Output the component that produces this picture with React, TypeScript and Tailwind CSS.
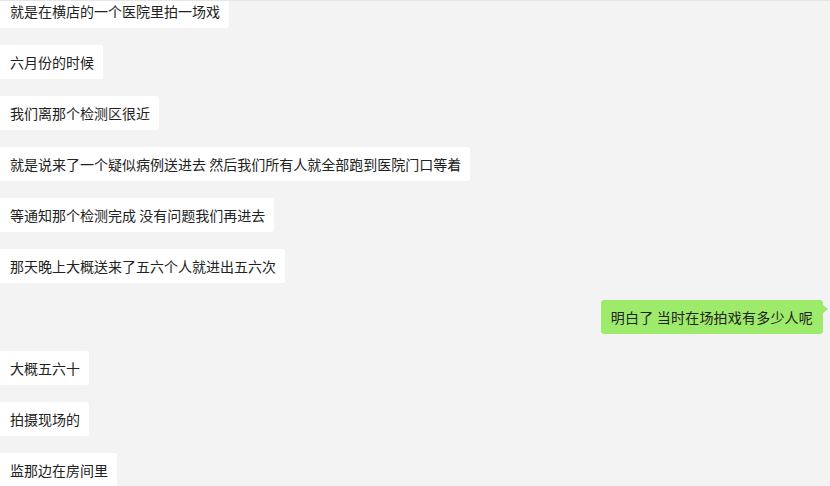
const messages = [
  { side: "left", text: "就是在横店的一个医院里拍一场戏" },
  { side: "left", text: "六月份的时候" },
  { side: "left", text: "我们离那个检测区很近" },
  { side: "left", text: "就是说来了一个疑似病例送进去 然后我们所有人就全部跑到医院门口等着" },
  { side: "left", text: "等通知那个检测完成 没有问题我们再进去" },
  { side: "left", text: "那天晚上大概送来了五六个人就进出五六次" },
  { side: "right", text: "明白了 当时在场拍戏有多少人呢" },
  { side: "left", text: "大概五六十" },
  { side: "left", text: "拍摄现场的" },
  { side: "left", text: "监那边在房间里" },
];

export default function App() {
  return (
    <div
      className="w-[830px] h-[486px] bg-[#f3f3f3] border-t border-[#e6e6e6] overflow-hidden"
      style={{ fontFamily: '"Microsoft YaHei", "Noto Sans CJK SC", sans-serif' }}
    >
      <div className="-mt-[7px] flex flex-col gap-[17px]">
        {messages.map((m, i) =>
          m.side === "left" ? (
            <div key={i} className="flex">
              <div className="-ml-[4px] h-[34px] pl-[14px] pr-[9px] flex items-center bg-white rounded-[3px] text-[14px] leading-[20px] text-[#222] whitespace-nowrap">
                {m.text}
              </div>
            </div>
          ) : (
            <div key={i} className="flex justify-end pr-[7px]">
              <div className="relative h-[34px] pl-[10px] pr-[10px] flex items-center bg-[#9eea6a] rounded-[3px] text-[14px] leading-[20px] text-[#222] whitespace-nowrap">
                <span className="tracking-[0.2px]">{m.text}</span>
                <span className="absolute left-full top-[5px] w-0 h-0 border-y-[4px] border-y-transparent border-l-[5px] border-l-[#9eea6a]" />
              </div>
            </div>
          )
        )}
      </div>
    </div>
  );
}
